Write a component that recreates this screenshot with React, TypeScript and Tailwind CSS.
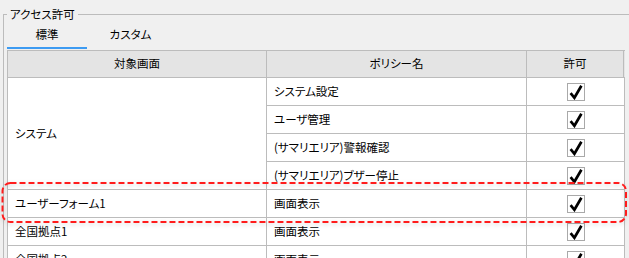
import React from "react";

const line = "border-[#bcbcbc]";

function Check() {
  return (
    <div className="w-[18px] h-[18px] border border-[#a9a9a9] bg-white flex items-center justify-center">
      <svg width="16" height="16" viewBox="0 0 16 16">
        <polyline
          points="2.6,9.2 6.4,13.8 13.4,1.8"
          fill="none"
          stroke="#000"
          strokeWidth="2.7"
          strokeLinejoin="miter"
          strokeLinecap="butt"
        />
      </svg>
    </div>
  );
}

function PolicyRow({ name }: { name: string }) {
  return (
    <div className={`flex h-[28px] border-b ${line}`}>
      <div className={`w-[260px] border-r ${line} flex items-center pl-[7px]`}>
        {name}
      </div>
      <div className="w-[97px] flex items-center justify-center">
        <Check />
      </div>
    </div>
  );
}

function ScreenRow({ screen, policy }: { screen: string; policy: string }) {
  return (
    <div className="flex bg-white">
      <div className={`w-[259px] border-r border-b ${line} flex items-center pl-[7px]`}>
        {screen}
      </div>
      <div className="flex flex-col">
        <PolicyRow name={policy} />
      </div>
    </div>
  );
}

export default function App() {
  const systemPolicies = [
    "システム設定",
    "ユーザ管理",
    "(サマリエリア)警報確認",
    "(サマリエリア)ブザー停止",
  ];

  return (
    <div className="relative w-[629px] h-[258px] overflow-hidden bg-[#f0f0f0] text-[11.5px] text-black font-['Noto_Sans_CJK_JP',sans-serif] [font-feature-settings:'palt']">
      <fieldset className={`ml-[3px] mt-[6px] w-[640px] border-t border-l ${line} pl-[3px]`}>
        <legend className="px-[3px] leading-[16px]">アクセス許可</legend>

        {/* Tabs */}
        <div className="flex h-[27px]">
          <div className="w-[80px] border-b-2 border-[#3d9bf2] flex items-center justify-center">
            標準
          </div>
          <div className="w-[87px] flex items-center justify-center pb-[2px]">
            カスタム
          </div>
        </div>

        {/* Grid */}
        <div className={`mt-[1px] w-[618px] border-t border-l ${line}`}>
          <div className={`flex h-[27px] bg-[#e4e4e4] border-b ${line}`}>
            <div className={`w-[259px] border-r ${line} flex items-center justify-center`}>
              対象画面
            </div>
            <div className={`w-[260px] border-r ${line} flex items-center justify-center`}>
              ポリシー名
            </div>
            <div className={`w-[97px] border-r ${line} flex items-center justify-center`}>
              許可
            </div>
          </div>

          <div className="flex bg-white">
            <div className={`w-[259px] border-r border-b ${line} flex items-center pl-[7px]`}>
              システム
            </div>
            <div className={`flex flex-col border-r ${line}`}>
              {systemPolicies.map((p) => (
                <PolicyRow key={p} name={p} />
              ))}
            </div>
          </div>

          <div className={`border-r ${line}`}>
            <ScreenRow screen="ユーザーフォーム1" policy="画面表示" />
            <ScreenRow screen="全国拠点1" policy="画面表示" />
            <ScreenRow screen="全国拠点2" policy="画面表示" />
          </div>
        </div>
      </fieldset>

      {/* highlight annotation */}
      <svg
        className="absolute left-0 top-0 pointer-events-none"
        width="629"
        height="258"
        viewBox="0 0 629 258"
      >
        <defs>
          <filter id="glow" x="-5%" y="-50%" width="110%" height="200%">
            <feDropShadow dx="0" dy="1.5" stdDeviation="2" floodColor="#000" floodOpacity="0.18" />
          </filter>
        </defs>
        <rect
          x="2.5"
          y="183"
          width="623.5"
          height="39"
          rx="8"
          fill="none"
          stroke="#ff1f1f"
          strokeWidth="2"
          strokeDasharray="6 3"
          filter="url(#glow)"
        />
      </svg>
    </div>
  );
}
